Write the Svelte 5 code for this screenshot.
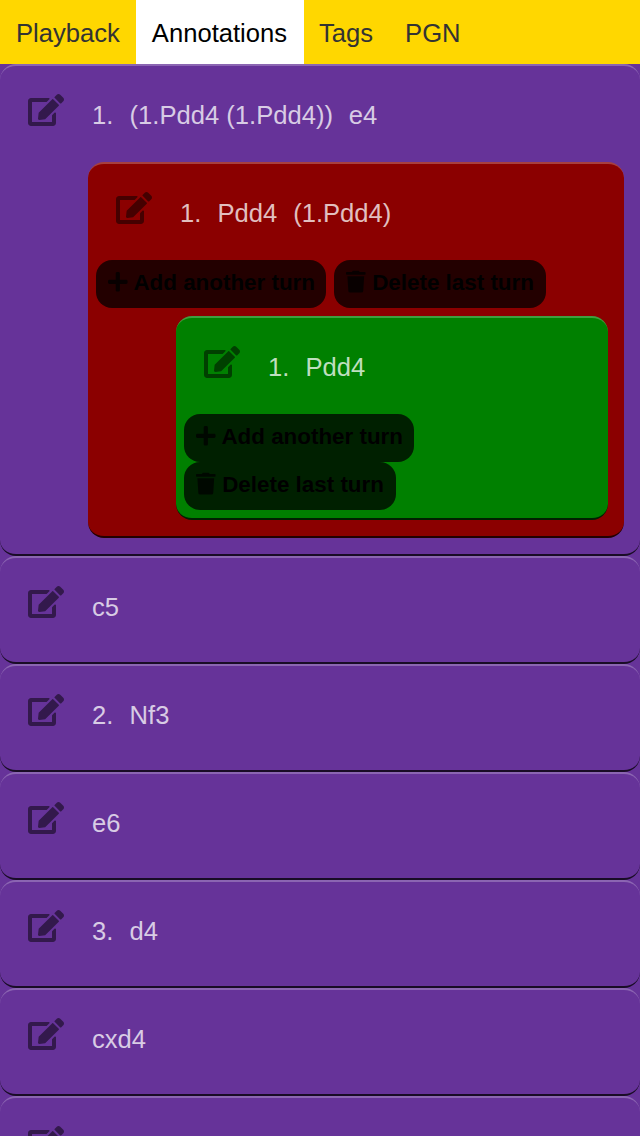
<script>
  const tabs = ['Playback', 'Annotations', 'Tags', 'PGN'];
  const active = 'Annotations';

  const turns = [
    {
      parts: ['1.', '(1.Pdd4 (1.Pdd4))', 'e4'],
      child: {
        tone: 'red',
        actions: true,
        parts: ['1.', 'Pdd4', '(1.Pdd4)'],
        child: { tone: 'green', actions: true, parts: ['1.', 'Pdd4'] }
      }
    },
    { parts: ['c5'] },
    { parts: ['2.', 'Nf3'] },
    { parts: ['e6'] },
    { parts: ['3.', 'd4'] },
    { parts: ['cxd4'] },
    { parts: [] }
  ];
</script>

{#snippet card(turn)}
  <section class={['card', turn.tone]}>
    <header>
      <svg class="edit" viewBox="0 0 576 512"><path d="M402.6 83.2l90.2 90.2c3.8 3.8 3.8 10 0 13.8L274.4 405.6l-92.8 10.3c-12.4 1.4-22.9-9.1-21.5-21.5l10.3-92.8L388.8 83.2c3.8-3.8 10-3.8 13.8 0zm162-22.9l-48.8-48.8c-15.2-15.2-39.9-15.2-55.2 0l-35.4 35.4c-3.8 3.8-3.8 10 0 13.8l90.2 90.2c3.8 3.8 10 3.8 13.8 0l35.4-35.4c15.2-15.3 15.2-40 0-55.2zM384 346.2V448H64V128h229.8c3.2 0 6.2-1.3 8.5-3.5l40-40c7.6-7.6 2.2-20.5-8.5-20.5H48C21.5 64 0 85.5 0 112v352c0 26.5 21.5 48 48 48h352c26.5 0 48-21.5 48-48V306.2c0-10.7-12.9-16-20.5-8.5l-40 40c-2.2 2.3-3.5 5.3-3.5 8.5z" /></svg>
      <div class="moves">
        {#each turn.parts as part}<span>{part}</span>{/each}
      </div>
    </header>
    {#if turn.actions}
      <div class="actions">
        <button class="add">
          <svg viewBox="0 0 448 512"><path d="M416 208H272V64c0-17.67-14.33-32-32-32h-32c-17.67 0-32 14.33-32 32v144H32c-17.67 0-32 14.33-32 32v32c0 17.67 14.33 32 32 32h144v144c0 17.67 14.33 32 32 32h32c17.67 0 32-14.33 32-32V304h144c17.67 0 32-14.33 32-32v-32c0-17.67-14.33-32-32-32z" /></svg>
          <span>Add another turn</span>
        </button>
        <button class="delete">
          <svg viewBox="0 0 448 512"><path d="M432 32H312l-9.4-18.7A24 24 0 0 0 281.1 0H166.8a23.72 23.72 0 0 0-21.4 13.3L136 32H16A16 16 0 0 0 0 48v32a16 16 0 0 0 16 16h416a16 16 0 0 0 16-16V48a16 16 0 0 0-16-16zM53.2 467a48 48 0 0 0 47.9 45h245.8a48 48 0 0 0 47.9-45L416 128H32z" /></svg>
          <span>Delete last turn</span>
        </button>
      </div>
    {/if}
    {#if turn.child}
      <div class="nested">{@render card(turn.child)}</div>
    {/if}
  </section>
{/snippet}

<div class="app">
  <nav>
    {#each tabs as tab}
      <a class:active={tab === active}>{tab}</a>
    {/each}
  </nav>
  <main>
    {#each turns as turn}
      {@render card(turn)}
    {/each}
  </main>
</div>

<style>
  :global(body) {
    background: #639;
    overflow: hidden;
  }
  .app {
    height: 1136px;
    overflow: hidden;
    font-family: 'Liberation Sans', Arial, sans-serif;
    font-size: 25.6px;
    background: #639;
  }
  nav {
    display: flex;
    height: 64px;
    background: #ffd700;
  }
  nav a {
    padding: 0 16px;
    line-height: 66px;
    color: #333;
  }
  nav a.active {
    padding-right: 16.6px;
    margin-right: -0.6px;
    background: #fff;
    color: #000;
  }
  .card {
    box-sizing: border-box;
    padding-bottom: 8px;
    border: 0 solid transparent;
    border-top: 2px solid rgba(255, 255, 255, 0.25);
    border-bottom: 2px solid rgba(0, 0, 0, 0.75);
    border-radius: 16px;
    background-color: #639;
  }
  .card.red {
    background-color: #8b0000;
  }
  .card.green {
    background-color: #008000;
  }
  header {
    display: flex;
    align-items: flex-start;
    height: 96px;
    padding-left: 28px;
    box-sizing: border-box;
  }
  .edit {
    width: 36px;
    height: 32px;
    margin: 28px 28px 0 0;
    fill: rgba(0, 0, 0, 0.5);
  }
  .moves {
    display: flex;
    gap: 15.8px;
    line-height: 98px;
    color: rgba(255, 255, 255, 0.75);
    white-space: nowrap;
  }
  .moves span:first-child {
    margin-right: 0.4px;
  }
  .actions {
    display: flex;
    flex-wrap: wrap;
    column-gap: 8px;
    padding: 0 8px;
  }
  .nested {
    padding: 0 16px 8px 88px;
  }
  .actions + .nested {
    padding-top: 8px;
  }
  button {
    display: flex;
    align-items: flex-start;
    box-sizing: border-box;
    height: 48px;
    margin: 0;
    padding: 0 0 0 12px;
    border: 0;
    border-radius: 16px;
    background: rgba(0, 0, 0, 0.75);
    color: #000;
    font: bold 22.4px 'Liberation Sans', Arial, sans-serif;
    line-height: 46px;
    white-space: nowrap;
  }
  .add {
    width: 230px;
    gap: 5.8px;
  }
  .delete {
    width: 212px;
    gap: 6.6px;
  }
  button svg {
    flex: none;
    width: 19.6px;
    height: 22.4px;
    margin-top: 10px;
    transform: translateY(0.6px);
    fill: rgba(0, 0, 0, 0.75);
  }
</style>
